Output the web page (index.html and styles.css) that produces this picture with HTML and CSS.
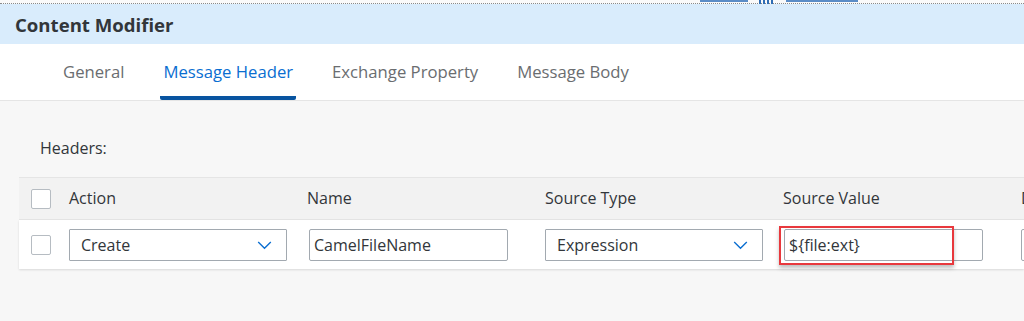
FILE: index.html
```html
<!DOCTYPE html>
<html lang="en">
<head>
    <meta charset="UTF-8">
    <meta name="viewport" content="width=device-width, initial-scale=1.0">
    <title>Content Modifier</title>
    <link rel="stylesheet" href="styles.css">
</head>
<body>
    <div class="top-strip">
        <span class="strip-line strip-line-a"></span>
        <span class="strip-grip"><i></i><i></i><i></i><i></i></span>
        <span class="strip-line strip-line-b"></span>
    </div>

    <div class="title-bar">Content Modifier</div>

    <div class="tabs">
        <div class="tab">General</div>
        <div class="tab active">Message Header</div>
        <div class="tab">Exchange Property</div>
        <div class="tab">Message Body</div>
    </div>

    <div class="content">
        <div class="section-label">Headers:</div>

        <div class="table">
            <div class="row head-row">
                <div class="cell check-cell"><span class="checkbox"></span></div>
                <div class="cell">Action</div>
                <div class="cell">Name</div>
                <div class="cell">Source Type</div>
                <div class="cell">Source Value</div>
                <div class="cell">Data Type</div>
            </div>
            <div class="row body-row">
                <div class="cell check-cell"><span class="checkbox"></span></div>
                <div class="cell">
                    <div class="select">
                        <span>Create</span>
                        <svg class="chevron" viewBox="0 0 16 10" width="15" height="9"><path d="M1 1 L8 8 L15 1" fill="none" stroke="#0a6ed1" stroke-width="1.5"/></svg>
                    </div>
                </div>
                <div class="cell">
                    <div class="input name-input">CamelFileName</div>
                </div>
                <div class="cell">
                    <div class="select">
                        <span>Expression</span>
                        <svg class="chevron" viewBox="0 0 16 10" width="15" height="9"><path d="M1 1 L8 8 L15 1" fill="none" stroke="#0a6ed1" stroke-width="1.5"/></svg>
                    </div>
                </div>
                <div class="cell value-cell">
                    <div class="input value-input">${file:ext}</div>
                    <div class="highlight"></div>
                </div>
                <div class="cell">
                    <div class="input"></div>
                </div>
            </div>
        </div>
    </div>
</body>
</html>
```

FILE: styles.css
```css
body {
    margin: 0;
    width: 1024px;
    height: 321px;
    overflow: hidden;
    background-color: #f7f7f7;
    font-family: "Open Sans", "Liberation Sans", sans-serif;
    color: #32363a;
}

.top-strip {
    height: 3px;
    background-color: #fafafa;
    border-bottom: 1px dotted #8a8a8a;
    display: flex;
    align-items: flex-start;
}

.strip-line {
    height: 2px;
    background-color: #5b8cc6;
}

.strip-line-a {
    margin-left: 700px;
    width: 48px;
}

.strip-line-b {
    width: 72px;
}

.strip-grip {
    display: flex;
    gap: 2px;
    margin: 0 13px 0 11px;
}

.strip-grip i {
    width: 2px;
    height: 4px;
    background-color: #2e6db5;
}

.title-bar {
    height: 40px;
    line-height: 41px;
    padding-left: 15px;
    background-color: #d9ecfc;
    font-size: 18.6px;
    font-weight: bold;
    color: #32363a;
}

.tabs {
    height: 56px;
    background-color: #fff;
    border-bottom: 1px solid #e5e5e5;
    display: flex;
    padding-left: 60px;
    gap: 33px;
}

.tab {
    padding: 0 3px;
    line-height: 56px;
    font-size: 16.7px;
    color: #6a6d70;
    border-bottom: 4px solid transparent;
}

.tab.active {
    color: #0a6ed1;
    border-bottom-color: #0854a0;
    border-radius: 2px;
}

.content {
    padding: 36px 0 0 19px;
}

.section-label {
    padding-left: 21px;
    font-size: 16px;
    height: 40px;
}

.row {
    display: grid;
    grid-template-columns: 50px repeat(5, 238px);
    align-items: center;
}

.head-row {
    height: 41px;
    background-color: #f2f2f2;
    border-top: 1px solid #e5e5e5;
    border-bottom: 1px solid #e5e5e5;
    font-size: 16px;
}

.head-row .cell {
    margin-top: -2px;
}

.head-row .check-cell {
    margin-top: 0;
}

.body-row {
    height: 49px;
    background-color: #fff;
    box-shadow: 0 1px 2px rgba(0, 0, 0, 0.12);
    font-size: 16px;
}

.check-cell {
    padding-left: 12px;
}

.checkbox {
    display: block;
    width: 18px;
    height: 18px;
    border: 1px solid #b6bcc2;
    border-radius: 2px;
    background-color: #fff;
}

.select {
    width: 218px;
    height: 32px;
    box-sizing: border-box;
    border: 1px solid #a2a9b0;
    border-radius: 1px;
    background-color: #fff;
    display: flex;
    align-items: center;
    justify-content: space-between;
    padding: 0 14px 0 11px;
}

.chevron {
    margin-top: 2px;
}

.input {
    width: 199px;
    height: 32px;
    box-sizing: border-box;
    border: 1px solid #a2a9b0;
    border-radius: 2px;
    background-color: #fff;
    padding-left: 4px;
    line-height: 30px;
}

.name-input {
    margin-left: 2px;
}

.value-cell {
    position: relative;
}

.value-input {
    margin-left: 1px;
}

.highlight {
    position: absolute;
    left: -4px;
    top: -3px;
    width: 171px;
    height: 35px;
    border: 2px solid #e8383d;
    box-shadow: 0 3px 4px rgba(0, 0, 0, 0.25);
}
```
